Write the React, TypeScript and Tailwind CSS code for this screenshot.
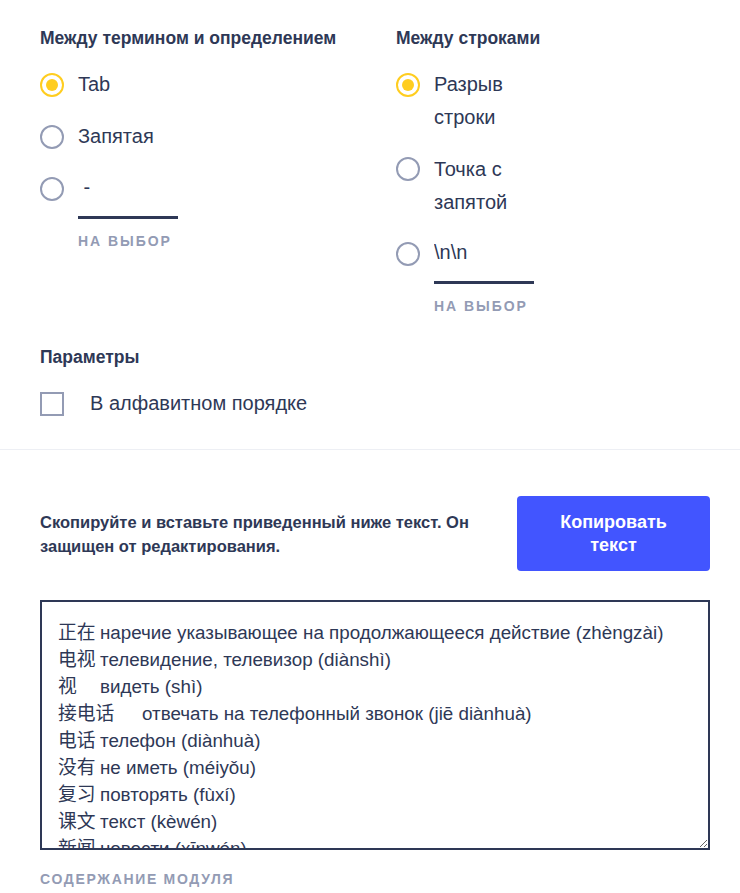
import { useState } from "react";

const FONT = { fontFamily: '"Liberation Sans", "Noto Sans CJK SC", Arial, sans-serif' };

const TERMS = [
  "正在\tнаречие указывающее на продолжающееся действие (zhèngzài)",
  "电视\tтелевидение, телевизор (diànshì)",
  "视\tвидеть (shì)",
  "接电话\tотвечать на телефонный звонок (jiē diànhuà)",
  "电话\tтелефон (diànhuà)",
  "没有\tне иметь (méiyǒu)",
  "复习\tповторять (fùxí)",
  "课文\tтекст (kèwén)",
  "新闻\tновости (xīnwén)",
  "看\tсмотреть (kàn)",
  "书\tкнига (shū)",
].join("\n");

function Radio({ checked }: { checked: boolean }) {
  return (
    <span
      className={
        checked
          ? "mt-[4.5px] flex h-6 w-6 shrink-0 items-center justify-center rounded-full border-2 border-[#ffcd1f]"
          : "mt-[4.5px] flex h-6 w-6 shrink-0 items-center justify-center rounded-full border-2 border-[#939bb4]"
      }
    >
      {checked && <span className="h-3 w-3 rounded-full bg-[#ffcd1f]" />}
    </span>
  );
}

function Option({
  label,
  checked,
  onClick,
}: {
  label: string;
  checked: boolean;
  onClick: () => void;
}) {
  return (
    <button type="button" onClick={onClick} className="flex items-start gap-[14px] text-left">
      <Radio checked={checked} />
      <span className="w-[100px] text-[20px] leading-[33px] text-[#2e3856]">{label}</span>
    </button>
  );
}

function CustomOption({
  value,
  checked,
  onClick,
}: {
  value: string;
  checked: boolean;
  onClick: () => void;
}) {
  const [text, setText] = useState(value);
  return (
    <div className="flex items-start gap-[14px]">
      <button type="button" onClick={onClick}>
        <Radio checked={checked} />
      </button>
      <div className="flex flex-col">
        <input
          value={text}
          onChange={(e) => setText(e.target.value)}
          className="h-[47px] w-[100px] border-b-[3px] border-[#2e3856] pb-[14px] text-[20px] leading-[33px] text-[#2e3856] outline-none"
          style={FONT}
        />
        <span className="mt-[14px] text-[14px] font-bold leading-[16px] tracking-[0.14em] text-[#939bb4]">
          НА ВЫБОР
        </span>
      </div>
    </div>
  );
}

export default function App() {
  const [termSep, setTermSep] = useState("tab");
  const [rowSep, setRowSep] = useState("newline");
  const [alpha, setAlpha] = useState(false);

  return (
    <div className="min-h-screen bg-white text-[#2e3856]" style={FONT}>
      <div className="pl-10 pr-[30px] pt-[26px]">
        <div className="grid grid-cols-[356px_1fr]">
          <div>
            <h3 className="mb-[18px] text-[17.5px] font-bold leading-[24px]">Между термином и определением</h3>
            <div className="flex flex-col gap-[19px]">
              <Option label="Tab" checked={termSep === "tab"} onClick={() => setTermSep("tab")} />
              <Option label="Запятая" checked={termSep === "comma"} onClick={() => setTermSep("comma")} />
              <CustomOption value=" -" checked={termSep === "custom"} onClick={() => setTermSep("custom")} />
            </div>
          </div>
          <div>
            <h3 className="mb-[18px] text-[17.5px] font-bold leading-[24px]">Между строками</h3>
            <div className="flex flex-col gap-[18.5px]">
              <Option label="Разрыв строки" checked={rowSep === "newline"} onClick={() => setRowSep("newline")} />
              <Option label="Точка с запятой" checked={rowSep === "semi"} onClick={() => setRowSep("semi")} />
              <CustomOption value="\n\n" checked={rowSep === "custom"} onClick={() => setRowSep("custom")} />
            </div>
          </div>
        </div>

        <h3 className="mt-[31px] mb-[18px] text-[17.5px] font-bold leading-[24px]">Параметры</h3>
        <button type="button" onClick={() => setAlpha(!alpha)} className="flex items-start gap-[26px] text-left">
          <span className="mt-[4.5px] flex h-6 w-6 shrink-0 items-center justify-center border-2 border-[#939bb4]">
            {alpha && <span className="h-3 w-3 bg-[#4255ff]" />}
          </span>
          <span className="text-[20px] leading-[33px]">В алфавитном порядке</span>
        </button>
      </div>

      <div className="mt-[29px] border-t border-[#edeff4]" />

      <div className="pl-10 pr-[30px] pt-[46px]">
        <div className="flex items-center justify-between">
          <p className="w-[440px] text-[16.5px] font-bold leading-[24px]">
            Скопируйте и вставьте приведенный ниже текст. Он защищен от редактирования.
          </p>
          <button
            type="button"
            className="flex h-[75px] w-[193px] items-center justify-center rounded-[4px] bg-[#4255ff] text-[18px] font-bold leading-[23px] text-white"
          >
            <span className="w-[130px]">Копировать текст</span>
          </button>
        </div>

        <textarea
          readOnly
          value={TERMS}
          className="mt-[29px] block h-[250px] w-full overflow-hidden border-2 border-[#2e3856] px-4 pt-[17px] pb-4 text-[18.8px] leading-[27px] text-[#2e3856] outline-none [tab-size:42px]"
          style={FONT}
        />
        <div className="mt-[21px] text-[14px] font-bold leading-[16px] tracking-[0.12em] text-[#939bb4]">
          СОДЕРЖАНИЕ МОДУЛЯ
        </div>
      </div>
    </div>
  );
}
